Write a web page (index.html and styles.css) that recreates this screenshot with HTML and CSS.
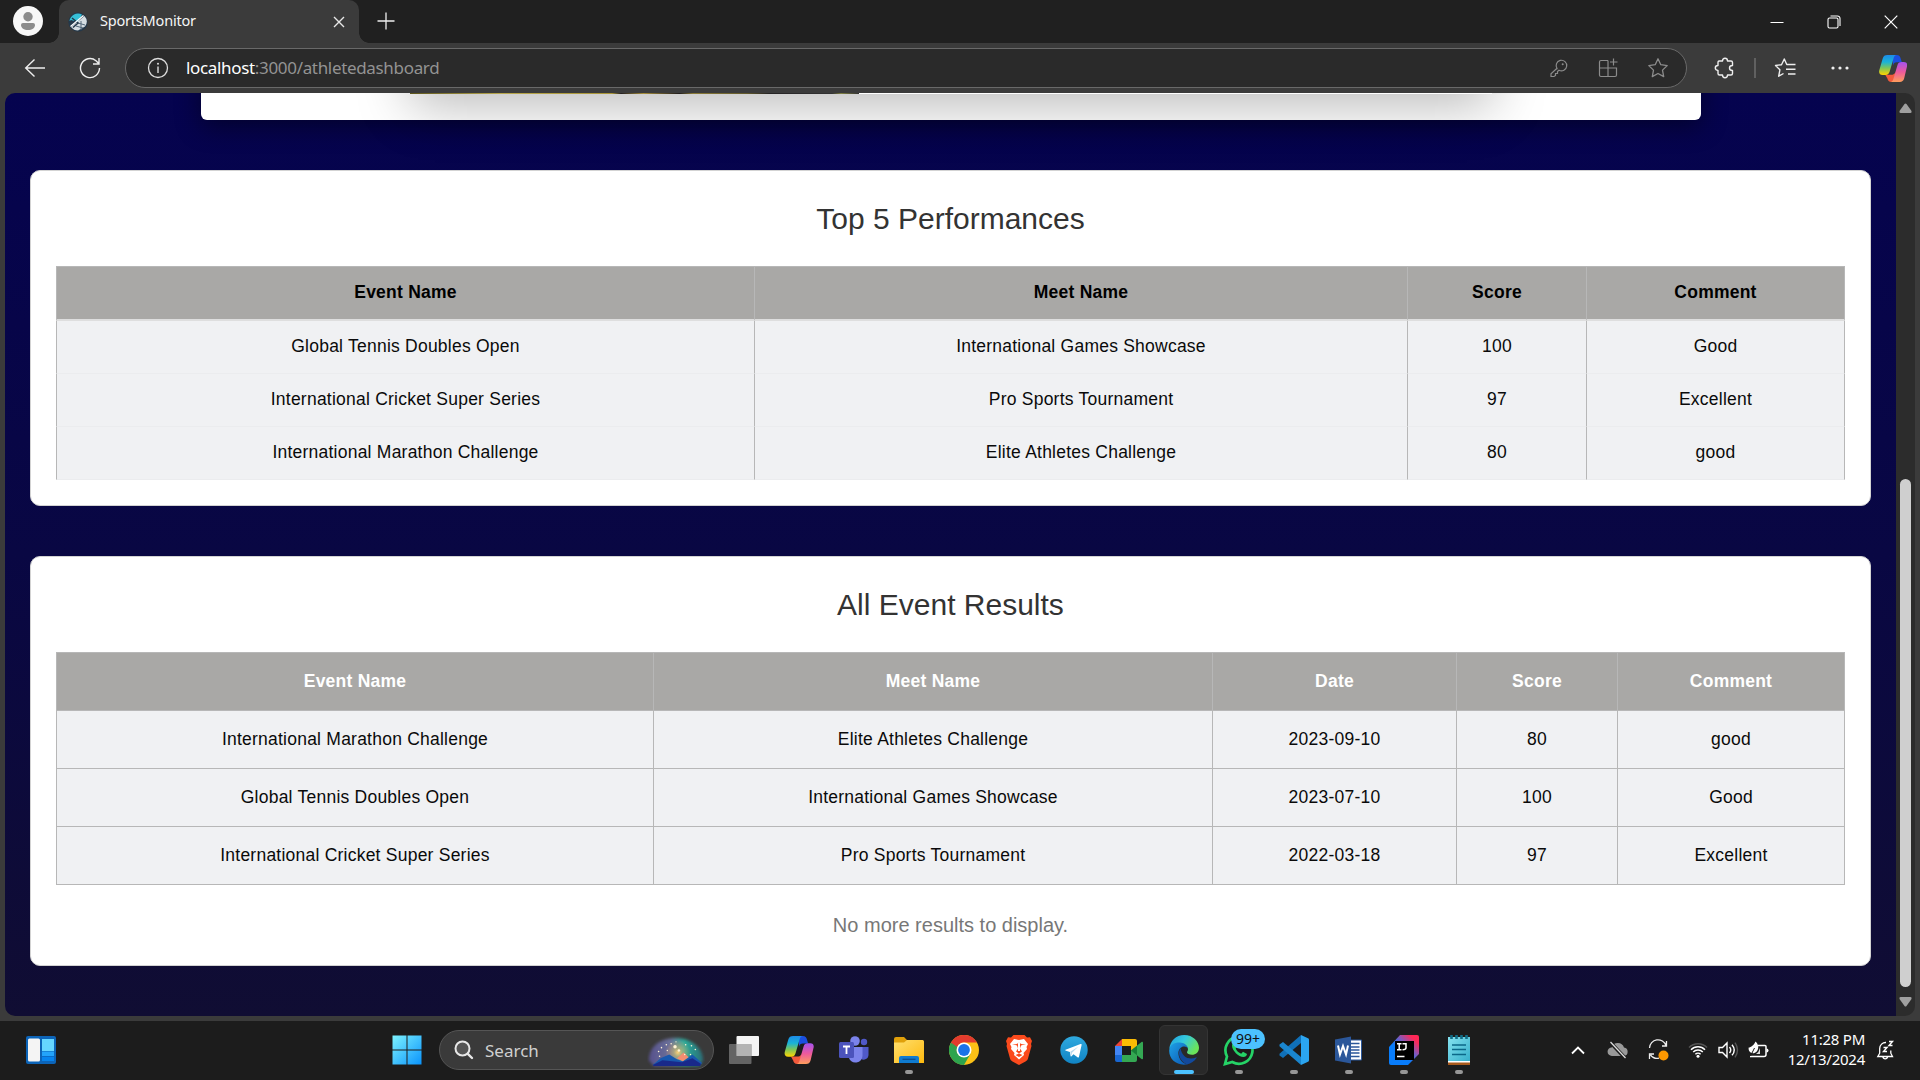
FILE: index.html
```html
<!DOCTYPE html>
<html lang="en">
<head>
<meta charset="utf-8">
<title>SportsMonitor</title>
<link rel="stylesheet" href="styles.css">
</head>
<body>
<svg class="defs" width="0" height="0" aria-hidden="true">
  <defs>
    <linearGradient id="cpA" x1="0" y1="0" x2="0" y2="1"><stop offset="0" stop-color="#1d8be8"/><stop offset=".35" stop-color="#19b3d8"/><stop offset=".65" stop-color="#7cc659"/><stop offset="1" stop-color="#ffd400"/></linearGradient>
    <linearGradient id="cpB" x1="0" y1="0" x2="0" y2="1"><stop offset="0" stop-color="#a552ee"/><stop offset=".5" stop-color="#ee5a9c"/><stop offset="1" stop-color="#ff9d5c"/></linearGradient>
    <linearGradient id="win" x1="0" y1="0" x2="1" y2="1"><stop offset="0" stop-color="#7df3ff"/><stop offset="1" stop-color="#0a93fb"/></linearGradient>
    <linearGradient id="edgeA" x1="0" y1="0" x2="1" y2=".5"><stop offset="0" stop-color="#1e9de0"/><stop offset=".5" stop-color="#34c8dd"/><stop offset="1" stop-color="#6be35a"/></linearGradient>
    <linearGradient id="edgeB" x1="0" y1="0" x2="1" y2="1"><stop offset="0" stop-color="#1ea2e6"/><stop offset="1" stop-color="#0b55b3"/></linearGradient>
    <linearGradient id="folder" x1="0" y1="0" x2="1" y2="1"><stop offset="0" stop-color="#ffdf6e"/><stop offset="1" stop-color="#fdb90e"/></linearGradient>
    <linearGradient id="ij" x1="0" y1="1" x2="1" y2="0"><stop offset=".4" stop-color="#087cfa"/><stop offset=".62" stop-color="#7a5bc0"/><stop offset=".85" stop-color="#fe2857"/></linearGradient>
    <linearGradient id="note" x1="0" y1="0" x2="1" y2="1"><stop offset="0" stop-color="#85e2f0"/><stop offset="1" stop-color="#34aeca"/></linearGradient>
    <linearGradient id="tele" x1="0" y1="0" x2="0" y2="1"><stop offset="0" stop-color="#2fa9df"/><stop offset="1" stop-color="#1184c4"/></linearGradient>
    <linearGradient id="night" x1="0" y1="0" x2="1" y2="0"><stop offset="0" stop-color="#56508c"/><stop offset=".4" stop-color="#6b7199"/><stop offset=".65" stop-color="#2cae9b"/><stop offset="1" stop-color="#2b6c76"/></linearGradient>
    <radialGradient id="glow"><stop offset="0" stop-color="#ffd27a"/><stop offset=".35" stop-color="#d8b870" stop-opacity=".6"/><stop offset="1" stop-color="#f4a45e" stop-opacity="0"/></radialGradient>
    <filter id="soft" x="-20%" y="-20%" width="140%" height="140%"><feGaussianBlur stdDeviation="1.6"/></filter>
    <symbol id="copilot" viewBox="1 2 27 26">
      <path d="M14 2h4c2.500 0 3.300 1.300 3.900 3.300L23 9h-5c-2 0-2.800.8-3.500 3z" fill="#1b4fe0"/>
      <path d="M7 21h7c1.500 0 2.400-1.500 3-3l-1.500 10H13c-2.500 0-3.300-1.300-3.900-3.300z" fill="#f25a3c"/>
      <path d="M9 2h8.500c-1.400.5-2 1.700-2.500 3.300L11.300 18c-.7 2.300-1.800 3.200-4 3.200H4.500C2 21.200.7 19.500 1.200 17L4.500 5.500C5.200 3 6.700 2 9 2z" fill="url(#cpA)"/>
      <path d="M21 28h-8.500c1.400-.5 2-1.700 2.500-3.300L18.700 12c.7-2.300 1.800-3.200 4-3.200h2.300c2.500 0 3.600 1.700 3 4.200L25.300 24.500C24.600 27 23.300 28 21 28z" fill="url(#cpB)"/>
    </symbol>
  </defs>
</svg>

<div class="screen">
  <header class="titlebar">
    <div class="avatar"><svg width="30" height="30" viewBox="0 0 30 30"><circle cx="15" cy="15" r="15" fill="#f7f7f7"/><circle cx="15" cy="10.700" r="4.700" fill="#8b8b8b"/><path d="M10 17h10a2 2 0 0 1 2 2c0 3-3 5-7 5s-7-2-7-5a2 2 0 0 1 2-2z" fill="#8b8b8b"/></svg></div>
    <div class="tab">
      <svg width="20" height="20" viewBox="0 0 20 20"><circle cx="10" cy="10" r="9.700" fill="#24384a"/><path d="M1.500 9A8.500 8.500 0 0 1 14 2.500L10 10 3 8z" fill="#35bfd6"/><path d="M3 15 16.500 4A8.500 8.500 0 0 1 17 14.500L10 18.500C7 18.500 5 17.500 3 15z" fill="#d5dde2"/><path d="M10 11l7 2M8 14l7 2M13 9v9" stroke="#54687a" stroke-width="1" fill="none"/><path d="M4 6l6 5-5 4.500" stroke="#24384a" stroke-width="1.500" fill="none"/><path d="M2.500 14.500 15.500 3.500" stroke="#fff" stroke-width="1.300"/></svg>
      <span class="tab-title">SportsMonitor</span>
      <svg class="tab-close" width="12" height="12" viewBox="0 0 12 12"><path d="M1 1l10 10M11 1 1 11" stroke="#e8e8e8" stroke-width="1.400"/></svg>
    </div>
    <svg class="new-tab" width="18" height="18" viewBox="0 0 18 18"><path d="M9 .5v17M.5 9h17" stroke="#eee" stroke-width="1.300"/></svg>
    <div class="win-controls">
      <span><svg width="14" height="14" viewBox="0 0 14 14"><path d="M.5 7.500h13" stroke="#fff"/></svg></span>
      <span><svg width="14" height="14" viewBox="0 0 14 14"><rect x="1" y="3" width="10" height="10" rx="1.500" fill="none" stroke="#fff" stroke-width="1.100"/><path d="M3.500 1h7A2.500 2.500 0 0 1 13 3.500V11" fill="none" stroke="#fff" stroke-width="1.100"/></svg></span>
      <span><svg width="14" height="14" viewBox="0 0 14 14"><path d="M.7.700l12.600 12.600M13.300.7.700 13.300" stroke="#fff" stroke-width="1.200"/></svg></span>
    </div>
  </header>

  <div class="toolbar">
    <span class="tool"><svg width="22" height="20" viewBox="0 0 22 20"><path d="M21 10H2M10.500 1.500 1.700 10l8.800 8.500" fill="none" stroke="#eee" stroke-width="1.400"/></svg></span>
    <span class="tool"><svg width="22" height="22" viewBox="0 0 22 22"><path d="M20.500 11A9.500 9.500 0 1 1 17 3.700L19.800 6.600M20 1v6h-6" fill="none" stroke="#eee" stroke-width="1.400"/></svg></span>
    <div class="address">
      <svg width="22" height="22" viewBox="0 0 22 22"><circle cx="11" cy="11" r="9.500" fill="none" stroke="#ddd" stroke-width="1.300"/><path d="M11 9.500V16" stroke="#ddd" stroke-width="1.400"/><circle cx="11" cy="6.800" r="1" fill="#ddd"/></svg>
      <span class="url"><b>localhost</b>:3000/athletedashboard</span>
      <div class="address-actions">
        <svg width="20" height="20" viewBox="0 0 20 20" fill="none" stroke="#8c8c8c" stroke-width="1.200"><path d="M8 10.500A5.300 5.300 0 1 1 10 12.300L8.500 13.500v2h-2v2L5 18.500H2v-2.800L8.300 10z"/><circle cx="13.700" cy="6.200" r="1" fill="#8c8c8c" stroke="none"/></svg>
        <svg width="20" height="20" viewBox="0 0 20 20" fill="none" stroke="#8c8c8c" stroke-width="1.200"><path d="M10 2.500H3A1.500 1.500 0 0 0 1.500 4v13A1.500 1.500 0 0 0 3 18.500h14a1.500 1.500 0 0 0 1.500-1.500v-7H1.500M10 2.500v16M15.500.5v7M12 4h7.500"/></svg>
        <svg width="22" height="22" viewBox="0 0 22 22" fill="none" stroke="#8c8c8c" stroke-width="1.300" stroke-linejoin="round"><path d="M11 1.800l2.800 5.900 6.400.9-4.700 4.500 1.200 6.500L11 16.500l-5.700 3.100 1.200-6.500L1.800 8.600l6.400-.9z"/></svg>
      </div>
    </div>
    <span class="tool puzzle"><svg width="22" height="22" viewBox="0 0 22 22" fill="none" stroke="#eee" stroke-width="1.400" stroke-linejoin="round"><path d="M5 4h3.500c0-1.600.9-2.700 2.500-2.700S13.500 2.400 13.500 4H17a1.500 1.500 0 0 1 1.500 1.500V8.500c-2 0-3 1-3 2.500s1 2.500 3 2.500v3A1.500 1.500 0 0 1 17 18h-3.500c0 1.600-.9 2.700-2.500 2.700S8.500 19.600 8.500 18H5.500A1.500 1.500 0 0 1 4 16.500V13.500c-1.600 0-2.700-.9-2.700-2.500S2.400 8.500 4 8.500V5.500A1.500 1.500 0 0 1 5 4z"/></svg></span>
    <i class="divider"></i>
    <span class="tool"><svg width="22" height="22" viewBox="0 0 22 22" fill="none" stroke="#eee" stroke-width="1.400" stroke-linejoin="round"><path d="M13 8 10.300 2 7.500 7.700l-6 .8 4.400 4.300-1.200 6.400L9.500 16.500M13 7.500h8.500M12 12.300h9.500M14 17h7.500"/></svg></span>
    <span class="tool"><svg width="18" height="4" viewBox="0 0 18 4" fill="#f0f0f0"><circle cx="2" cy="2" r="1.600"/><circle cx="9" cy="2" r="1.600"/><circle cx="16" cy="2" r="1.600"/></svg></span>
    <span class="tool last"><svg width="28" height="27"><use href="#copilot"/></svg></span>
  </div>

  <div class="window-body">
    <main class="page">
      <section class="profile">
        <div class="banner"><div class="photo"></div></div>
      </section>

      <section class="card">
        <h2>Top 5 Performances</h2>
        <table class="top">
          <colgroup><col class="t1"><col class="t2"><col class="t3"><col class="t4"></colgroup>
          <thead><tr><th>Event Name</th><th>Meet Name</th><th>Score</th><th>Comment</th></tr></thead>
          <tbody>
            <tr><td>Global Tennis Doubles Open</td><td>International Games Showcase</td><td>100</td><td>Good</td></tr>
            <tr><td>International Cricket Super Series</td><td>Pro Sports Tournament</td><td>97</td><td>Excellent</td></tr>
            <tr><td>International Marathon Challenge</td><td>Elite Athletes Challenge</td><td>80</td><td>good</td></tr>
          </tbody>
        </table>
      </section>

      <section class="card">
        <h2>All Event Results</h2>
        <table class="results">
          <colgroup><col class="r1"><col class="r2"><col class="r3"><col class="r4"><col class="r5"></colgroup>
          <thead><tr><th>Event Name</th><th>Meet Name</th><th>Date</th><th>Score</th><th>Comment</th></tr></thead>
          <tbody>
            <tr><td>International Marathon Challenge</td><td>Elite Athletes Challenge</td><td>2023-09-10</td><td>80</td><td>good</td></tr>
            <tr><td>Global Tennis Doubles Open</td><td>International Games Showcase</td><td>2023-07-10</td><td>100</td><td>Good</td></tr>
            <tr><td>International Cricket Super Series</td><td>Pro Sports Tournament</td><td>2022-03-18</td><td>97</td><td>Excellent</td></tr>
          </tbody>
        </table>
        <p class="end-note">No more results to display.</p>
      </section>
    </main>
    <div class="scrollbar">
      <svg width="13" height="10" viewBox="0 0 13 10"><path d="M5.500 1q1-1 2 0l5 7q.5 2-1 2h-10q-1.500 0-1-2z" fill="#9f9f9f"/></svg>
      <i class="thumb"></i>
      <svg width="13" height="10" viewBox="0 0 13 10"><path d="M5.500 9q1 1 2 0l5-7q.5-2-1-2h-10q-1.500 0-1 2z" fill="#9f9f9f"/></svg>
    </div>
  </div>

  <footer class="taskbar">
    <svg class="widgets" width="30" height="28" viewBox="0 0 30 28"><rect width="30" height="28" rx="2" fill="#0c64b8"/><rect x="2" y="2.500" width="12" height="23" rx="1.500" fill="#f4f4f4"/><path d="M16 3h12v12H16z" fill="#66d6ff"/><path d="M16 15.500h12V20H16z" fill="#23a4fb"/><path d="M16 20.700h12V25H16z" fill="#0784ee"/></svg>

    <nav class="apps">
      <span class="app"><svg width="30" height="30" viewBox="0 0 30 30"><path d="M.5.500h14v14H.5zM15.500.500h14v14h-14zM.5 15.500h14v14H.5zM15.500 15.500h14v14h-14z" fill="url(#win)"/></svg></span>
      <div class="search">
        <svg width="20" height="20" viewBox="0 0 20 20"><circle cx="8.500" cy="8.500" r="7" fill="#555" stroke="#e8e8e8" stroke-width="2"/><path d="M13.800 13.800 18 18" stroke="#e8e8e8" stroke-width="2.400" stroke-linecap="round"/></svg>
        <span>Search</span>
        <svg class="fireworks" width="58" height="33" viewBox="0 0 60 34">
          <path d="M2 26C2 10 16 3 30 3s28 9 28 23l-4 6H7z" fill="url(#night)" filter="url(#soft)"/>
          <circle cx="32" cy="18" r="13" fill="url(#glow)"/><path d="M6 31 14 24l9-4 8 5 6 2 10-7 10 9-2 2z" fill="#1858ae"/><path d="M6 31l10-5 20 2 11-4 9 6-1 2H7z" fill="#19298a"/><path d="M31 24l7-6 5 5-6 4z" fill="#f38d70"/>
          <g fill="#fff4d4"><circle cx="29" cy="12" r="1.800"/><circle cx="33" cy="16" r="1.300"/><circle cx="25" cy="9" r=".8"/><circle cx="20" cy="10" r=".8"/><circle cx="15" cy="13" r=".8"/><circle cx="12" cy="17" r=".8"/><circle cx="13" cy="22" r=".8"/><circle cx="21" cy="16" r=".7"/><circle cx="40" cy="10" r=".8"/><circle cx="46" cy="11" r=".8"/><circle cx="50" cy="15" r=".8"/><circle cx="45" cy="20" r=".8"/><circle cx="39" cy="20" r=".8"/><circle cx="30" cy="7" r=".7"/></g>
        </svg>
      </div>
      <span class="app"><svg width="30" height="28" viewBox="0 0 30 28"><rect x="7.500" width="22.500" height="20" rx="1" fill="#f4f4f4"/><rect y="8" width="22.500" height="20" rx="1" fill="#777" fill-opacity=".8"/><path d="M7.500 8h15v12h-15z" fill="#b3b3b3"/></svg></span>
      <span class="app"><svg width="30" height="28"><use href="#copilot"/></svg></span>
      <span class="app"><svg width="30" height="28" viewBox="0 0 30 28"><circle cx="16" cy="5" r="4.800" fill="#7b83eb"/><circle cx="25" cy="6" r="3.200" fill="#5059c9"/><path d="M22 11h7.500v8a5 5 0 0 1-7.500 4z" fill="#5059c9"/><path d="M10 11h13.500v9a7 7 0 0 1-13.500 2z" fill="#7b83eb"/><rect y="6" width="15" height="16" rx="1.500" fill="#4b53bc"/><path d="M4 10.500h7M7.500 10.500V18" stroke="#fff" stroke-width="1.800"/></svg></span>
      <span class="app open"><svg width="30" height="28" viewBox="0 0 30 28"><path d="M0 3a2 2 0 0 1 2-2h8l3 3h16v8H0z" fill="#e0a00a"/><path d="M0 6.500h10l3-2.500h15.500A1.500 1.500 0 0 1 30 5.500V27H0z" fill="url(#folder)"/><path d="M5 27v-5a2 2 0 0 1 2-2h16a2 2 0 0 1 2 2v5z" fill="#0f7bd0"/><path d="M8.500 23.300h13" stroke="#0a4d8f" stroke-width="1.300"/></svg></span>
      <span class="app"><svg width="30" height="30" viewBox="0 0 30 30"><circle cx="15" cy="15" r="15" fill="#fbc116"/><path d="M2 7.500A15 15 0 0 0 15 30l6.500-11.200L15 15z" fill="#2da44e"/><path d="M2 7.500A15 15 0 0 1 28 7.500H15A7.500 7.500 0 0 0 8.200 12v6z" fill="#e33b2e"/><path d="M2 7.500 8.500 18.700 8 12z" fill="#2da44e"/><circle cx="15" cy="15" r="7.500" fill="#fff"/><circle cx="15" cy="15" r="5.900" fill="#1a73e8"/></svg></span>
      <span class="app"><svg width="26" height="30" viewBox="0 0 26 30"><path d="M7.500 0h11l2.500 2.500 3-.3L26 6l-1 3 .5 2L22 23.500c-.5 1.500-1 2-2.500 3L13 30l-6.500-3.500c-1.500-1-2-1.500-2.500-3L.5 11 1 9 0 6l2-3.800 3 .3z" fill="#fb4a1c"/><path d="M8 4l5 1 5-1 4 5-1.500 3 .5 2-3.500 4 .5 2-5 4.500L8 20l.5-2L5 14l.5-2L4 9z" fill="#fff"/><path d="M6 9l5 1.500 1 3-2 3 3 2 3-2-2-3 1-3L20 9l-4 .3-3-1.500-3 1.500zM9.500 20l3.500-1.500 3.500 1.500-3.500 2z" fill="#fb4a1c"/><path d="M12 8h2v8h-2z" fill="#fff"/></svg></span>
      <span class="app"><svg width="28" height="28" viewBox="0 0 28 28"><circle cx="14" cy="14" r="13.700" fill="url(#tele)"/><path d="M5.500 13.800 20.500 8c.8-.3 1.300.1 1.100 1.100L19 20.700c-.2.900-.8 1-1.500.6l-4-3-2 2c-.5.400-.8.300-.9-.3l-.7-4-3.900-1.200c-.9-.3-.9-.7-.5-1z" fill="#fff"/><path d="M10.300 15.700 18.500 10.500l-6.500 6.200-.7 3z" fill="#b9d9ed"/></svg></span>
      <span class="app"><svg width="28" height="23" viewBox="0 0 28 23"><path d="M7 0v7H0z" fill="#ea4335"/><path d="M0 7h7v9H0z" fill="#4285f4"/><path d="M0 16h7v7H2a2 2 0 0 1-2-2z" fill="#1967d2"/><path d="M7 0h13a2 2 0 0 1 2 2v8l-6 2V7H7z" fill="#fbbc04"/><path d="M7 16h9v-4l6-2v11a2 2 0 0 1-2 2H7z" fill="#34a853"/><path d="M16 11.500 26.500 3c.8-.6 1.500-.2 1.500.5v16c0 .7-.7 1.100-1.500.5z" fill="#34a853"/><path d="M16 11.500 22 6.700v9.600z" fill="#188038"/></svg></span>
      <span class="app current"><svg width="30" height="30" viewBox="0 0 30 30"><path d="M.3 14C1 6 7 0 15.200 0 24 0 30 6.500 30 12.800c0 4.500-3.400 7-7 7-3 0-5-1-5-2.500 0-.9 1-1.300 1-3 0-3-3-5.500-7-5.500C6.500 8.800 2 11 .3 14z" fill="url(#edgeA)"/><path d="M.2 15.500C.6 9.700 5.500 7.200 11 7.500c4 .2 7.300 2.700 8 6-1-1.500-2.500-2.300-4.500-2-4 .8-5.500 4.500-5 8 .6 4.500 3.500 9 9 9.800C8.500 31.500-.2 24.500.2 15.500z" fill="url(#edgeB)"/><path d="M11.500 13c-3 4-2 12.500 6.500 16.500 4-1 7.500-3.500 9.500-6.500.3-.5 0-.9-.6-.6-6 2.800-13.900.6-15.400-9.400z" fill="#12499c"/></svg></span>
      <span class="app open whatsapp"><svg width="32" height="32" viewBox="0 0 32 32"><path d="M2 30 4 22.500A13.500 13.500 0 1 1 9.300 28z" fill="none" stroke="#25d366" stroke-width="2.700"/><path d="M11.500 8.500c-1.500 0-2.500 1.500-2.500 3 0 5 6.500 11.500 11.500 11.500 1.800 0 3.300-1 3.500-3l-4-2.200-1.800 2c-2.500-1-4.500-3-5.500-5.300l1.500-1.800z" fill="#25d366"/></svg><em>99+</em></span>
      <span class="app open"><svg width="30" height="30" viewBox="0 0 30 30"><path d="M22 0v8L4 23 .5 20.500v-1.700z" fill="#1070b8"/><path d="M22 30v-8L4 7 .5 9.500v1.700z" fill="#1a86cf"/><path d="M22 0l7 3.200c.7.300 1 .8 1 1.500v20.600c0 .7-.3 1.200-1 1.500L22 30z" fill="#2ba5f0"/></svg></span>
      <span class="app open"><svg width="27" height="28" viewBox="0 0 27 28"><path d="M14 4h12.500v20H14z" fill="#fff" stroke="#2b579a"/><path d="M15 7.500h9.500M15 11h9.500M15 14h9.500M15 17h9.500M15 20.500h9.500" stroke="#2b579a" stroke-width="1.300"/><path d="M0 3.500 16 .5v27L0 24.500z" fill="#2b579a"/><path d="M3 9.500 5 18.500 8 10l3 8.500 2-9" fill="none" stroke="#fff" stroke-width="2"/></svg></span>
      <span class="app open"><svg width="30" height="30" viewBox="0 0 30 30"><path d="M11 0h17a2 2 0 0 1 2 2v17L19 30H2a2 2 0 0 1-2-2V12z" fill="url(#ij)"/><path d="M6 6h19v19H6z" fill="#000"/><path d="M8 8.700h4.500M10.200 8.700v6M8 14.700h4.500M13.500 8.700H17v4q0 2-3.500 2M8 21.500h7.500" fill="none" stroke="#fff" stroke-width="1.500"/></svg></span>
      <span class="app open"><svg width="22" height="30" viewBox="0 0 22 30"><path d="M0 2h22v25H0z" fill="url(#note)"/><path d="M0 26.500h22V30H0z" fill="#a85a1c"/><path d="M0 26h22v1.500H0z" fill="#fff"/><path d="M4 10h14M4 14.500h14M4 19.500h14" stroke="#0b6788" stroke-width="1.500"/><path d="M3.500 0v4M8.500 0v4M13.500 0v4M18.500 0v4" stroke="#116c86" stroke-width="2.600"/></svg></span>
    </nav>

    <div class="tray">
      <span class="wide"><svg width="14" height="10" viewBox="0 0 14 10"><path d="M1 8.500 7 2.500l6 6" fill="none" stroke="#fff" stroke-width="1.800"/></svg></span>
      <span class="wide"><svg width="22" height="18" viewBox="0 0 22 18"><path d="M5 15a4.300 4.300 0 0 1-.3-8.600A6.500 6.500 0 0 1 17 6.500 4.300 4.300 0 0 1 17 15z" fill="#999"/><path d="M3 1l15 16" stroke="#1c1c1c" stroke-width="3.500"/><path d="M3.500 1l15 16" stroke="#ddd" stroke-width="1.200"/></svg></span>
      <span class="wide"><svg width="22" height="22" viewBox="0 0 22 22"><path d="M2.500 9A8.500 8.500 0 0 1 19 6.500M19.500 2v5H15M12 19.200A8.500 8.500 0 0 1 3.500 16M2.500 20v-5H7" fill="none" stroke="#eee" stroke-width="1.300"/><circle cx="16.500" cy="16.500" r="5" fill="#ff9800"/></svg></span>
      <span><svg width="20" height="18" viewBox="0 0 20 18" fill="none" stroke="#fff" stroke-width="1.500"><path d="M1 6.500a12.500 12.500 0 0 1 18 0" stroke="#555"/><path d="M3 8.700a9.700 9.700 0 0 1 14 0M5.200 11a6.700 6.700 0 0 1 9.600 0M7.400 13.200a3.700 3.700 0 0 1 5.200 0"/><circle cx="10" cy="15.300" r="1.500" fill="#fff" stroke="none"/></svg></span>
      <span><svg width="21" height="18" viewBox="0 0 21 18" fill="none" stroke="#fff" stroke-width="1.400"><path d="M1 6.500h3.500L9 2v14l-4.500-4.500H1zM11.500 6q2.500 3 0 6M14 3.700q4.500 5.300 0 10.600"/><path d="M17 1.700q5 7.300 0 14.600" stroke="#555"/></svg></span>
      <span><svg width="21" height="18" viewBox="0 0 21 18"><path d="M10 4.500h7a1 1 0 0 1 1 1v8a2 2 0 0 1-2 2H2" fill="none" stroke="#fff" stroke-width="1.500"/><path d="M18.500 7.500q2 0 2 2t-2 2z" fill="#fff"/><path d="M7.500.500c4.500 4 3 10-1 11.500C3 13 0 10 .7 6.500 3 6.500 6 4 7.500.5z" fill="#fff"/><path d="M12 7v6H8q3-2 4-6z" fill="#ddd"/><path d="M2.500 15 6.500 7" stroke="#1c1c1c"/></svg></span>
      <div class="clock"><span>11:28 PM</span><span>12/13/2024</span></div>
      <svg class="bell" width="20" height="22" viewBox="0 0 20 22" fill="none" stroke="#fff" stroke-width="1.300"><path d="M10 3.500A6 6 0 0 0 3.700 9.500v4.700L1.800 17.500h14.700l-1.700-3.300v-2.700M6.800 17.700c.5 3 4.300 3 4.800 0"/><path d="M7.500 8.500H11l-3.500 4H11M13 2.500h3.500l-3.500 4h3.500" stroke-width="1.400"/></svg>
    </div>
  </footer>
</div>
</body>
</html>
```
FILE: styles.css
```css
* { box-sizing: border-box; }
body { margin: 0; background: #1c1c1c; font-family: "Liberation Sans", Arial, sans-serif; }
svg { display: block; flex: none; }
.defs { position: absolute; }
.screen { width: 1920px; height: 1080px; overflow: hidden; display: grid; grid-template-rows: 43px 50px 928px 59px; }

/* Window frame */
.titlebar { display: flex; background: #202020; font-family: "Noto Sans", sans-serif; }
.avatar { width: 59px; padding: 6px 0 0 13px; }
.tab { position: relative; width: 300px; display: flex; align-items: center; padding: 0 14px 0 9px; background: #3b3b3b; border-radius: 10px 10px 0 0; }
.tab::before, .tab::after { content: ""; position: absolute; bottom: 0; width: 10px; height: 10px; }
.tab::before { left: -10px; background: radial-gradient(circle at 0 0, #202020 9.5px, #3b3b3b 10px); }
.tab::after { right: -10px; background: radial-gradient(circle at 100% 0, #202020 9.5px, #3b3b3b 10px); }
.tab-title { margin: -3px 0 0 12px; font-size: 14.5px; letter-spacing: -.2px; color: #f5f5f5; }
.tab-close { margin-left: auto; }
.new-tab { margin: 12px 0 0 18px; }
.win-controls { display: flex; margin: 0 1px 0 auto; }
.win-controls span { width: 57px; display: grid; place-items: center; }

.toolbar { display: flex; align-items: center; padding-left: 7px; background: #3b3b3b; }
.tool { width: 55px; display: grid; place-items: center; flex: none; }
.tool.last { width: 52px; }
.tool.puzzle { margin-left: 10px; }
.divider { width: 2px; height: 20px; margin: 0 1px 0 2px; background: #606060; }
.address { width: 1562px; height: 40px; margin-left: 8px; padding: 0 17px 0 21px; display: flex; align-items: center; flex: none; background: #2a2a2a; border: 1px solid #696969; border-radius: 20px; }
.url { margin-left: 17px; font: 17px/24px "Noto Sans", sans-serif; letter-spacing: -.33px; color: #939393; }
.url b { font-weight: 400; color: #fff; }
.address-actions { display: flex; align-items: center; gap: 29px; margin-left: auto; }

.window-body { display: flex; padding: 0 5px 5px; background: #3b3b3b; }
.scrollbar { width: 19px; display: flex; flex-direction: column; align-items: center; padding: 10px 0 9px; background: #2c2c2c; border-radius: 0 10px 10px 0; }
.thumb { width: 11px; height: 508px; margin: 366px 0 10px; border-radius: 6px; background: #cfcfcf; }

/* Dashboard page */
.page { width: 1891px; height: 923px; overflow: hidden; display: flex; flex-direction: column; align-items: center; border-radius: 10px 0 0 10px; background: linear-gradient(#05034f, #090743 50%, #100d33); }
.profile { width: 1500px; height: 227px; margin-top: -200px; padding: 0 209px; flex: none; background: #fff; border-radius: 6px; box-shadow: 0 6px 26px rgba(0, 0, 0, .45); }
.banner { height: 201px; background: #fff; box-shadow: 0 12px 50px rgba(0, 0, 0, .27); }
.photo { width: 449px; height: 201px; background: linear-gradient(90deg, #5c551c, #b7a64c 20%, #a89436 45%, #221e20 47%, #a78e38 52%, #201c1c 60%, #8a7a36 63%, #62592b 75%, #252324 80%, #333 94%, #7f8040 96%, #333); }
.card { width: 1841px; margin-top: 50px; padding: 25px; flex: none; background: #fff; border: 1px solid #d3d3d3; border-radius: 10px; }
.card h2 { margin: 0; height: 70px; font-size: 30px; font-weight: 400; line-height: 46px; text-align: center; color: #333; }

table { width: 1789px; table-layout: fixed; border-collapse: separate; border-spacing: 0; font-size: 17.5px; letter-spacing: .23px; line-height: 20px; text-align: center; color: #0a0a0a; }
th, td { padding: 0; border-right: 1px solid #b7b7b7; border-bottom: 1px solid #b7b7b7; }
th:first-child, td:first-child { border-left: 1px solid #b7b7b7; }
th { background: #a9a8a6; border-top: 1px solid #b7b7b7; }
td { background: #f0f1f3; }
.top th { height: 55px; border-bottom: 2px solid #dedede; padding-bottom: 2px; color: #000; }
.top td { height: 53px; border-bottom-color: #ebecee; padding-bottom: 2px; }
.results th { height: 59px; color: #fff; padding-bottom: 2px; }
.results td { height: 58px; padding-bottom: 2px; }
.t1 { width: 699px; } .t2 { width: 653px; } .t3 { width: 179px; } .t4 { width: 258px; }
.r1 { width: 598px; } .r2 { width: 559px; } .r3 { width: 244px; } .r4 { width: 161px; } .r5 { width: 227px; }
.end-note { margin: 25px 0 0; height: 30px; font-size: 20px; line-height: 30px; text-align: center; color: #777; }

/* Taskbar */
.taskbar { display: flex; align-items: center; padding-bottom: 1px; background: #1c1c1c; font-family: "Noto Sans", sans-serif; }
.widgets { margin-left: 26px; }
.apps { display: flex; align-items: center; margin-left: 323px; height: 58px; }
.app { position: relative; width: 55px; height: 50px; display: grid; place-items: center; }
.app:first-child { margin-right: 5px; }
.search { width: 275px; height: 40px; margin-right: 2px; display: flex; align-items: center; padding: 0 8px 0 14px; border: 1px solid #555; border-radius: 20px; background: #3a3a3a; font-size: 17px; color: #d0d0d0; }
.search span { margin-left: 11px; }
.fireworks { margin: 3px 0 0 auto; }
.app.open::after, .app.current::after { content: ""; position: absolute; bottom: 1px; width: 8px; height: 4px; border-radius: 2px; background: #969696; }
.app.current { width: 49px; margin: 0 3px; border: 1px solid #343434; border-radius: 6px; background: #292929; }
.app.current::after { width: 20px; bottom: 0; background: #4cc2ff; }
.app em { position: absolute; left: 20px; top: 4px; width: 34px; height: 20px; border-radius: 10px; background: #4cc2ff; color: #111; font-size: 14px; font-style: normal; line-height: 20px; text-align: center; }
.tray { display: flex; align-items: center; margin-left: auto; }
.tray > span { width: 30px; display: grid; place-items: center; }
.tray > .wide { width: 40px; }
.tray > .wide:nth-child(3) { margin-right: 5px; }
.clock { width: 92px; margin-top: -3px; display: flex; flex-direction: column; font-size: 15px; line-height: 20px; letter-spacing: -.25px; text-align: right; color: #fff; }
.bell { margin: 0 24px 0 11px; }
```
